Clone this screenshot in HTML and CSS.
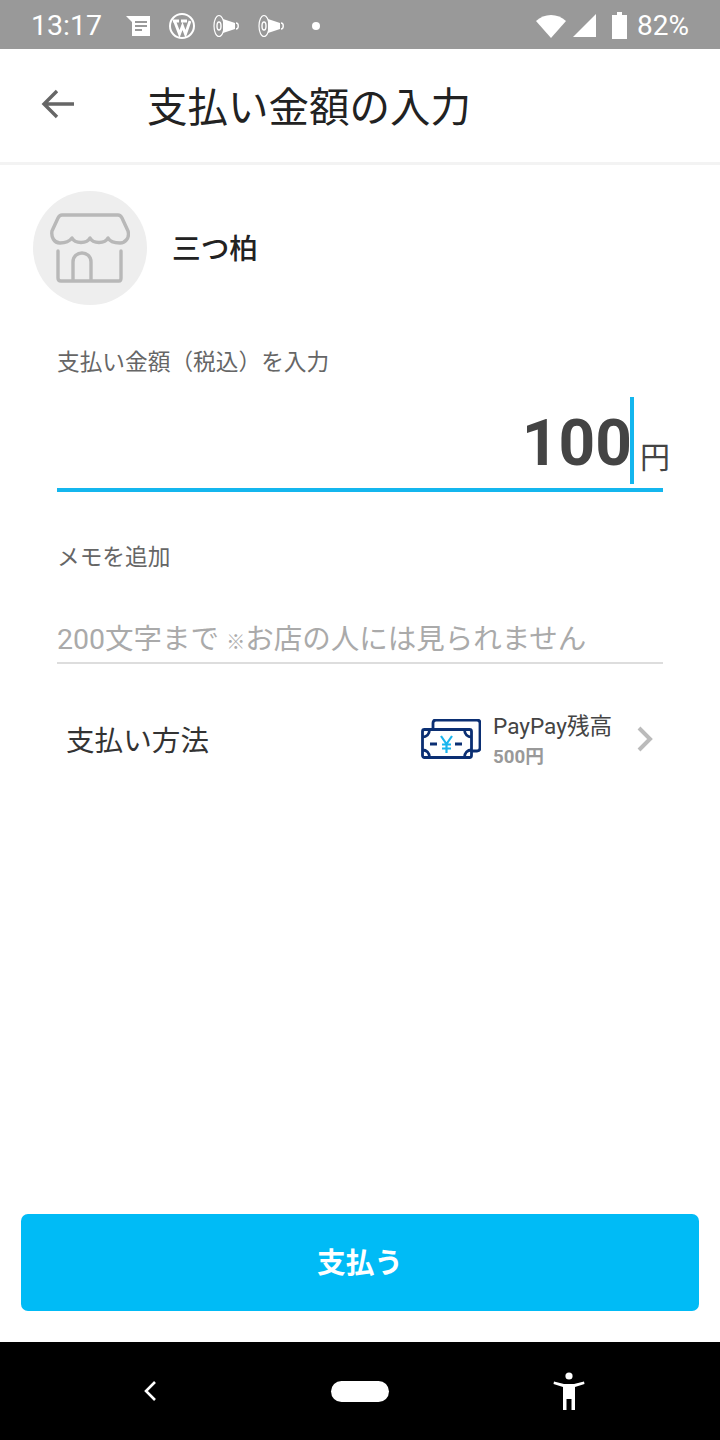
FILE: index.html
```html
<!DOCTYPE html>
<html lang="ja">
<head>
  <meta charset="UTF-8" />
  <meta name="viewport" content="width=device-width, initial-scale=1.0" />
  <title>支払い金額の入力</title>
  <link rel="stylesheet" href="styles.css">
</head>
<body>
  <div class="status-bar">
    <span class="status-time">13:17</span>
    <div class="status-icons">
      <svg class="ic-news" width="26" height="22" viewBox="0 0 26 22"><path d="M1 1h24v20H7V7z" fill="#fff"/><path d="M10 7h12M10 11h12M10 15h7" stroke="#999" stroke-width="2"/></svg>
      <svg width="28" height="28" viewBox="0 0 28 28"><circle cx="14" cy="14" r="12" fill="none" stroke="#fff" stroke-width="2"/><path d="M6.500 9l5 13 3-8 3 8 4.500-13M5 9h6M13 9h6" fill="none" stroke="#fff" stroke-width="2.800"/></svg>
      <svg width="28" height="24" viewBox="0 0 28 24"><ellipse cx="6" cy="12" rx="5" ry="10.500" fill="none" stroke="#fff" stroke-width="1.200"/><ellipse cx="6" cy="12" rx="2" ry="4" fill="none" stroke="#fff" stroke-width="1.400"/><path d="M10 5l12 4v6l-12 4z" fill="#fff"/><path d="M23 9c3 0 3 6 0 6" fill="none" stroke="#fff" stroke-width="1.400"/></svg>
      <svg width="28" height="24" viewBox="0 0 28 24"><ellipse cx="6" cy="12" rx="5" ry="10.500" fill="none" stroke="#fff" stroke-width="1.200"/><ellipse cx="6" cy="12" rx="2" ry="4" fill="none" stroke="#fff" stroke-width="1.400"/><path d="M10 5l12 4v6l-12 4z" fill="#fff"/><path d="M23 9c3 0 3 6 0 6" fill="none" stroke="#fff" stroke-width="1.400"/></svg>
      <span class="status-dot"></span>
    </div>
    <div class="status-right">
      <svg width="30" height="24" viewBox="0 0 30 24"><path d="M0 7C8-1 22-1 30 7L15 24z" fill="#fff"/></svg>
      <svg class="ic-signal" width="23" height="23" viewBox="0 0 23 23"><path d="M23 0v23H0z" fill="#fff"/></svg>
      <svg class="ic-battery" width="15" height="27" viewBox="0 0 15 27"><path d="M5 0h5v3h5v24H0V3h5z" fill="#fff"/></svg>
      <span class="status-battery">82%</span>
    </div>
  </div>

  <header class="app-header">
    <svg class="back-arrow" width="34" height="32" viewBox="0 0 34 32"><path d="M33 16H3M16 3L3 16l13 13" fill="none" stroke="#666" stroke-width="3.400"/></svg>
    <h1>支払い金額の入力</h1>
  </header>

  <main class="content">
    <div class="shop-row">
      <div class="shop-avatar">
        <svg width="80" height="72" viewBox="0 0 80 72" fill="none" stroke="#b8b8b8" stroke-width="3.400" stroke-linejoin="round" stroke-linecap="round">
          <path d="M12 3H68c2 0 3 1 4 3l6 13c2 7-3 12-8 12-5 0-10-1-12-5-3 6-15 6-18 0-3 6-15 6-18 0-3 4-7 5-12 5-6 0-9-6-8-12l6-13c1-2 2-3 4-3z"/>
          <path d="M8 39v27c0 2 1 3 3 3h58c1 0 2-1 2-3V39"/>
          <path d="M23 68V50c0-12 18-12 18 0v18"/>
        </svg>
      </div>
      <span class="shop-name">三つ柏</span>
    </div>

    <div class="amount-block">
      <label class="field-label">支払い金額（税込）を入力</label>
      <div class="amount-input">
        <span class="amount-value">100</span><span class="caret"></span><span class="amount-unit">円</span>
      </div>
    </div>

    <div class="memo-block">
      <label class="field-label">メモを追加</label>
      <div class="memo-input">200文字まで <span class="memo-mark">※</span>お店の人には見られません</div>
    </div>

    <div class="pay-method">
      <span class="pay-title">支払い方法</span>
      <div class="pay-detail">
        <svg class="money-icon" width="60" height="40" viewBox="0 0 60 40" fill="none" stroke="#0b2f73" stroke-width="2.800" stroke-linejoin="round">
          <path d="M12 10V4c0-2 1-3 3-3h41c2 0 3 1 3 3v25c0 2-1 3-3 3h-6"/>
          <rect x="1.500" y="10.500" width="49" height="28" rx="2" fill="#fff"/>
          <path d="M1.500 18c4 0 7-3 7-7.500M43.500 10.500c0 4.500 3 7.500 7 7.500M1.500 31c4 0 7 3 7 7.500M50.500 31c-4 0-7 3-7 7.500"/>
          <path d="M9 25h7M34 25h7"/>
          <path d="M20 17l5.500 8 5.500-8M25.500 25v9M21 25.500h9M21 29.500h9" stroke="#18b5ee" stroke-width="2.200"/>
        </svg>
        <div class="pay-text">
          <div class="pay-name">PayPay残高</div>
          <div class="pay-balance">500円</div>
        </div>
        <svg class="chevron" width="18" height="26" viewBox="0 0 18 26"><path d="M3 2l11 11L3 24" fill="none" stroke="#bbb" stroke-width="4"/></svg>
      </div>
    </div>
  </main>

  <div class="pay-footer">
    <button class="pay-button">支払う</button>
  </div>

  <nav class="nav-bar">
    <svg width="14" height="22" viewBox="0 0 14 22"><path d="M12 2L3 11l9 9" fill="none" stroke="#fff" stroke-width="2.600"/></svg>
    <span class="home-pill"></span>
    <svg width="32" height="38" viewBox="0 0 32 38"><circle cx="16" cy="4" r="3.600" fill="#fff"/><path d="M1 9.500l10 2.500h10l10-2.500.5 2.500L22 15v23h-3.500V27h-5v11H10V15L.5 12z" fill="#fff"/></svg>
  </nav>
</body>
</html>
```

FILE: styles.css
```css
* {
  box-sizing: border-box;
  margin: 0;
  padding: 0;
}

body {
  width: 720px;
  height: 1440px;
  display: flex;
  flex-direction: column;
  background: #fff;
  color: #222;
  font-family: Roboto, "Noto Sans CJK JP", sans-serif;
  overflow: hidden;
}

.status-bar {
  height: 49px;
  background: #999;
  color: #fff;
  display: flex;
  align-items: center;
  padding: 2px 31px 0;
}
.status-time {
  font-size: 28.500px;
  width: 94px;
}
.status-icons {
  display: flex;
  align-items: center;
  gap: 17px;
}
.status-dot {
  width: 8px;
  height: 8px;
  margin-left: 9px;
  border-radius: 50%;
  background: #fff;
}
.status-right {
  margin-left: auto;
  display: flex;
  align-items: center;
  gap: 7px;
}
.ic-signal {
  margin-right: 9px;
}
.status-battery {
  font-size: 28px;
  margin-left: 3px;
}

.app-header {
  height: 116px;
  display: flex;
  align-items: center;
  padding: 0 0 3px 41px;
  border-bottom: 3px solid #f3f3f3;
}
.app-header h1 {
  margin-left: 72px;
  font-size: 40.500px;
  font-weight: 400;
  color: #222;
}

.content {
  flex: 1;
  padding: 26px 57px 0;
}

.shop-row {
  display: flex;
  align-items: center;
  margin-left: -24px;
}
.shop-avatar {
  width: 114px;
  height: 114px;
  border-radius: 50%;
  background: #eee;
  display: flex;
  align-items: center;
  justify-content: center;
}
.shop-name {
  margin: 0 0 4px 25px;
  font-size: 28.700px;
  font-weight: 500;
  color: #222;
}

.field-label {
  display: block;
  font-size: 22.700px;
  line-height: 32px;
  color: #666;
}

.amount-block {
  margin-top: 42px;
}
.amount-input {
  position: relative;
  height: 110px;
  margin-top: 3px;
  border-bottom: 4px solid #14b6ee;
  display: flex;
  align-items: flex-end;
  justify-content: flex-end;
  padding-right: 29px;
}
.amount-value {
  font-size: 64px;
  font-weight: 700;
  line-height: 88px;
  color: #444;
}
.caret {
  width: 4px;
  height: 87px;
  margin: 0 0 4px -2px;
  background: #14b6ee;
}
.amount-unit {
  position: absolute;
  right: -7px;
  bottom: 8px;
  font-size: 30px;
  line-height: 44px;
  color: #444;
}

.memo-block {
  margin-top: 50px;
}
.memo-input {
  margin-top: 47px;
  height: 43px;
  border-bottom: 2px solid #ddd;
  font-size: 28.500px;
  line-height: 38px;
  color: #aaa;
}
.memo-mark {
  font-size: 19px;
}

.pay-method {
  display: flex;
  align-items: center;
  justify-content: space-between;
  height: 60px;
  margin: 45px 9px 0 9px;
}
.pay-title {
  margin-bottom: 2px;
  font-size: 28.600px;
  color: #333;
}
.pay-detail {
  display: flex;
  align-items: center;
}
.pay-text {
  margin-left: 12px;
  padding-top: 4px;
  width: 125px;
}
.pay-name {
  font-size: 22.600px;
  line-height: 32px;
  color: #444;
}
.pay-balance {
  font-size: 18.700px;
  font-weight: 700;
  line-height: 28px;
  color: #999;
}
.chevron {
  margin-left: 18px;
}

.pay-footer {
  padding: 0 21px 31px;
}
.pay-button {
  display: block;
  width: 100%;
  height: 97px;
  padding-bottom: 4px;
  border: 0;
  border-radius: 7px;
  background: #00bbf6;
  color: #fff;
  font-family: inherit;
  font-size: 28.700px;
  font-weight: 700;
}

.nav-bar {
  height: 98px;
  background: #000;
  display: flex;
  align-items: center;
  padding: 0 135px 0 143px;
  justify-content: space-between;
}
.home-pill {
  width: 58px;
  height: 21px;
  margin-left: 10px;
  border-radius: 11px;
  background: #fff;
}
```
